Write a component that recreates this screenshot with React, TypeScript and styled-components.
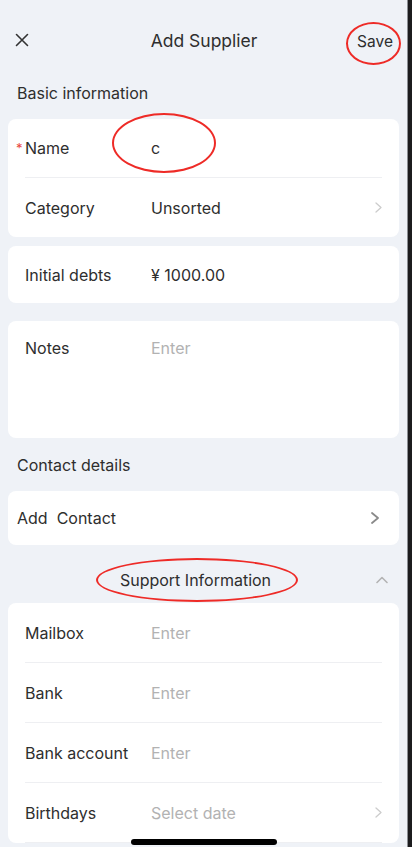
import React from "react";
import styled, { createGlobalStyle } from "styled-components";

const Global = createGlobalStyle`
  * { box-sizing: border-box; }
  html, body { margin: 0; padding: 0; background: #1c1c1e; }
  body { font-family: Inter, "Noto Sans", "Liberation Sans", Arial, sans-serif; color: #2e2e2e; }
`;

const Frame = styled.div`
  display: flex;
  min-height: 847px;
`;

const Screen = styled.div`
  position: relative;
  width: 408px;
  background: #eff2f7;
  border-right: 1px solid #8c8f94;
  padding-bottom: 40px;
  overflow: hidden;
`;

const Header = styled.header`
  height: 80px;
  display: flex;
  align-items: center;
  justify-content: space-between;
  padding: 0 15px 0 15px;
`;

const IconButton = styled.button`
  border: none;
  background: none;
  padding: 0;
  width: 40px;
  display: flex;
  align-items: center;
  cursor: pointer;
`;

const Title = styled.h1`
  margin: 0;
  font-size: 17.5px;
  font-weight: 400;
  color: #2e2e2e;
`;

const SaveButton = styled.button`
  border: none;
  background: none;
  padding: 0;
  font-family: inherit;
  font-size: 15.5px;
  color: #2e2e2e;
  width: 40px;
  text-align: right;
  margin-top: 2px;
  margin-right: -1px;
`;

const SectionTitle = styled.div<{ $top: number; $bottom: number }>`
  padding: ${(p) => p.$top}px 17px ${(p) => p.$bottom}px;
  font-size: 16px;
  line-height: 26px;
  color: #2e2e2e;
`;

const Card = styled.section<{ $gap?: number }>`
  margin: 0 8px ${(p) => p.$gap ?? 0}px;
  background: #fff;
  border-radius: 8px;
  padding: 0 17px;
`;

const Row = styled.div<{ $h: number; $divider?: boolean; $top?: boolean }>`
  position: relative;
  height: ${(p) => p.$h}px;
  display: flex;
  align-items: ${(p) => (p.$top ? "flex-start" : "center")};
  padding-top: ${(p) => (p.$top ? "17px" : "0")};
  border-bottom: ${(p) => (p.$divider ? "1px solid #eeeff2" : "none")};
`;

const Label = styled.span`
  width: 126px;
  flex-shrink: 0;
  font-size: 16px;
  color: #2e2e2e;
`;

const Required = styled.span`
  position: absolute;
  left: -9px;
  top: 50%;
  margin-top: -8px;
  font-size: 13px;
  color: #e8463e;
`;

const Value = styled.span<{ $placeholder?: boolean }>`
  flex: 1;
  font-size: 16px;
  color: ${(p) => (p.$placeholder ? "#b2b2b2" : "#2e2e2e")};
`;

const LinkCard = styled.section`
  margin: 0 8px;
  background: #fff;
  border-radius: 8px;
  height: 54px;
  display: flex;
  align-items: center;
  justify-content: space-between;
  padding: 0 20px 0 9px;
  font-size: 16px;
  color: #2e2e2e;
`;

const Collapse = styled.div`
  position: relative;
  display: flex;
  justify-content: center;
  padding: 22px 16px 10px 0;
  font-size: 16px;
  line-height: 26px;
  color: #2e2e2e;
`;

const CollapseIcon = styled.span`
  position: absolute;
  right: 19px;
  top: 31px;
  display: flex;
`;

const Ring = styled.div`
  position: absolute;
  border: 2.5px solid #ee2b27;
  border-radius: 50%;
  pointer-events: none;
`;

const HomeBar = styled.div`
  position: fixed;
  left: 131px;
  bottom: 2px;
  width: 146px;
  height: 6px;
  border-radius: 3px;
  background: #000;
`;

const Close = () => (
  <svg width="14" height="14" viewBox="0 0 14 14">
    <path d="M1.5 1.5 L12.5 12.5 M12.5 1.5 L1.5 12.5" stroke="#333" strokeWidth="1.6" strokeLinecap="round" />
  </svg>
);

const ChevronRight = ({ color, w, h, sw }: { color: string; w: number; h: number; sw: number }) => (
  <svg width={w + 2} height={h + 2} viewBox={`0 0 ${w + 2} ${h + 2}`}>
    <path d={`M1 1 L${w + 1} ${h / 2 + 1} L1 ${h + 1}`} fill="none" stroke={color} strokeWidth={sw} strokeLinecap="round" strokeLinejoin="round" />
  </svg>
);

const ChevronUp = () => (
  <svg width="12" height="8" viewBox="0 0 12 8">
    <path d="M1 6.5 L6 1.5 L11 6.5" fill="none" stroke="#b4b4b4" strokeWidth="1.6" strokeLinecap="round" strokeLinejoin="round" />
  </svg>
);

export default function App() {
  return (
    <>
      <Global />
      <Frame>
        <Screen>
          <Header>
            <IconButton aria-label="close">
              <Close />
            </IconButton>
            <Title>Add Supplier</Title>
            <SaveButton>Save</SaveButton>
          </Header>

          <SectionTitle $top={0} $bottom={13}>Basic information</SectionTitle>
          <Card $gap={9}>
            <Row $h={59} $divider>
              <Required>*</Required>
              <Label>Name</Label>
              <Value>c</Value>
            </Row>
            <Row $h={59}>
              <Label>Category</Label>
              <Value>Unsorted</Value>
              <ChevronRight color="#cccccc" w={5} h={9} sw={1.3} />
            </Row>
          </Card>
          <Card $gap={18}>
            <Row $h={57}>
              <Label>Initial debts</Label>
              <Value>¥ 1000.00</Value>
            </Row>
          </Card>
          <Card>
            <Row $h={117} $top>
              <Label>Notes</Label>
              <Value $placeholder>Enter</Value>
            </Row>
          </Card>

          <SectionTitle $top={14} $bottom={13}>Contact details</SectionTitle>
          <LinkCard>
            <span>Add&nbsp; Contact</span>
            <ChevronRight color="#8a8a8a" w={6} h={10} sw={1.8} />
          </LinkCard>

          <Collapse>
            Support Information
            <CollapseIcon>
              <ChevronUp />
            </CollapseIcon>
          </Collapse>
          <Card>
            <Row $h={60} $divider>
              <Label>Mailbox</Label>
              <Value $placeholder>Enter</Value>
            </Row>
            <Row $h={60} $divider>
              <Label>Bank</Label>
              <Value $placeholder>Enter</Value>
            </Row>
            <Row $h={60} $divider>
              <Label>Bank account</Label>
              <Value $placeholder>Enter</Value>
            </Row>
            <Row $h={60} $divider>
              <Label>Birthdays</Label>
              <Value $placeholder>Select date</Value>
              <ChevronRight color="#cccccc" w={5} h={9} sw={1.3} />
            </Row>
          </Card>

          <Ring style={{ left: 346, top: 22, width: 55, height: 43 }} />
          <Ring style={{ left: 112, top: 113, width: 104, height: 60 }} />
          <Ring style={{ left: 96, top: 558, width: 202, height: 44 }} />
        </Screen>
      </Frame>
      <HomeBar />
    </>
  );
}
